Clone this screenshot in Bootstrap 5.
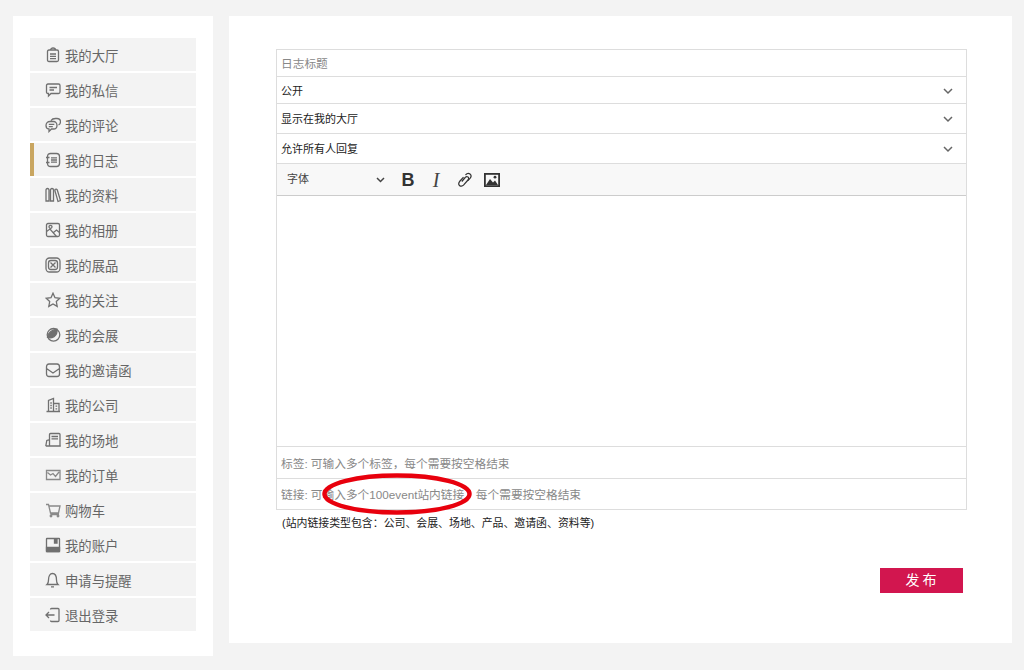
<!DOCTYPE html>
<html lang="zh">
<head>
<meta charset="utf-8">
<title>我的日志</title>
<link href="https://cdn.jsdelivr.net/npm/bootstrap@5.3.0/dist/css/bootstrap.min.css" rel="stylesheet">
<style>
html,body{height:670px;overflow:hidden}
body{background:#f3f3f3;font-family:"Liberation Sans","Noto Sans CJK SC",sans-serif;color:#333}
.page-wrap{padding:16px 12px 14px 13px;gap:16px;height:670px}
.side-panel{width:200px;height:640px;background:#fff;padding:22px 17px 0;flex:none}
.side-list{display:flex;flex-direction:column;gap:2px;list-style:none;margin:0;padding:0}
.side-item{height:33px;background:#f3f3f3;display:flex;align-items:center;padding-left:15px;font-size:13.33px;color:#666;gap:4px;border-left:0 solid #c9a661}
.side-item.on{border-left-width:4px;padding-left:11px}
.side-item span{padding-top:4px}
.side-item svg{width:16px;height:16px;flex:none;fill:none;stroke:#707070;stroke-width:1.3}
.main-panel{width:783px;height:627px;background:#fff;padding:33px 45px 0 47px;flex:none;position:relative}
.form-box{border:1px solid #ddd}
.f-row{display:flex;align-items:center;padding:0 4px;font-size:11px;color:#222;border-bottom:1px solid #ddd}
.f-row:last-child{border-bottom:0}
.r27{height:27px}.r30{height:30px}.r32{height:32px}
.ph{color:#888;font-size:11.7px}
.pad2{padding-top:2px}.pad3{padding-top:3px}
.chev{margin-left:auto;margin-right:9px;width:10px;height:7px;fill:none;stroke:#666;stroke-width:1.5}
.tool-row{height:32px;background:#f8f8f8;border-bottom:1px solid #ccc;display:flex;align-items:center;padding-left:10px;font-size:11px;color:#444}
.tool-font{width:98px;display:flex;align-items:center;justify-content:space-between;margin-right:9px}
.tool-font svg{width:9px;height:6px;fill:none;stroke:#444;stroke-width:1.5}
.tool-btn{width:28px;display:flex;justify-content:center;align-items:center;color:#333}
.t-b{font-weight:700;font-size:18px;font-family:"Liberation Sans",sans-serif;line-height:1}
.t-i{font-style:italic;font-family:"Liberation Serif",serif;font-size:20px;line-height:1;color:#444}
.edit-area{height:251px;border-bottom:1px solid #ddd}
.note-line{font-size:10.9px;color:#222;margin:5px 0 0 6px;line-height:16px}
.send-row{display:flex;justify-content:flex-end;margin:37px 4px 0 0}
.send-btn{width:83px;height:25px;background:#d2164f;color:#fff;font-size:14px;border:0;border-radius:0;padding:0 0 0 2px;letter-spacing:3px;line-height:25px}
.red-ring{position:absolute;left:93px;top:457px;width:150px;height:42px;pointer-events:none}
</style>
</head>
<body>
<div class="d-flex page-wrap">
  <aside class="side-panel">
    <ul class="side-list">
      <li class="side-item"><svg viewBox="0 0 16 16"><path d="M2.500 4.500C2.500 3.500 3 3 4 3h8c1 0 1.500.5 1.500 1.500V13c0 1-.5 1.500-1.500 1.500H4c-1 0-1.500-.5-1.500-1.500zM5.500 3c0-1 1-2 2.500-2s2.500 1 2.500 2M5 7h6M5 9.300h6M5 11.600h6"/></svg><span>我的大厅</span></li>
      <li class="side-item"><svg viewBox="0 0 16 16"><path d="M1.500 3.500c0-1 .5-1.500 1.500-1.500h10.500c1 0 1.500.5 1.500 1.500V10c0 1-.5 1.500-1.500 1.500H6L3.500 14v-2.500H3c-1 0-1.500-.5-1.500-1.500zM4.500 5.500h7.500M4.500 8H9"/></svg><span>我的私信</span></li>
      <li class="side-item"><svg viewBox="0 0 16 16"><path d="M6 3.500C7 2 8.500 1.500 10.500 1.500h1.500c2.200 0 3.500 1.500 3.500 3.200 0 1.500-.8 2.800-2 3.300M1 8.500c0-2.200 1.500-4 4-4h3.500c2 0 3.500 1.800 3.500 4s-1.500 3.500-3.500 3.500H6.500L4 14.500V12C2.200 11.800 1 10.300 1 8.500zM3.800 7.300h5.500M3.800 9.600h4"/></svg><span>我的评论</span></li>
      <li class="side-item on"><svg viewBox="0 0 16 16"><path d="M2.500 4.500c0-2 1.200-3 3-3h6c2 0 3 1 3 3v7c0 2-1 3-3 3h-6c-1.800 0-3-1-3-3zM1 5.500h3.500M1 10.500h3.500M6 5.800h6M6 8h6M6 10.200h6"/></svg><span>我的日志</span></li>
      <li class="side-item"><svg viewBox="0 0 16 16" stroke-width="1.500"><path d="M1 3c0-1 .5-1.500 1.500-1.500S4 2 4 3v11H1zM5.500 3C5.500 2 6 1.500 7 1.500S8.500 2 8.500 3v11h-3zM10 2.500c.8-.8 2-.5 2.300.5L15.500 13.500l-2.500 1L10 4z"/></svg><span>我的资料</span></li>
      <li class="side-item"><svg viewBox="0 0 16 16"><rect x="1.500" y="1.500" width="13" height="13" rx="1.500"/><path d="M1.500 9.500 5 7l6.500 7.500M8.500 10.500 11.500 8l3 2.500"/><circle cx="5.500" cy="4.800" r="1.500"/></svg><span>我的相册</span></li>
      <li class="side-item"><svg viewBox="0 0 16 16"><rect x="1" y="1" width="14" height="14" rx="3.500"/><rect x="3.500" y="3.500" width="9" height="9" rx="2.500"/><path d="m5.500 5.500 5 5M10.500 5.500l-5 5"/></svg><span>我的展品</span></li>
      <li class="side-item"><svg viewBox="0 0 16 16"><path d="m8 1.200 2 4.500 4.800.6-3.500 3.300.9 4.800L8 12l-4.200 2.400.9-4.800-3.500-3.300L6 5.700z"/></svg><span>我的关注</span></li>
      <li class="side-item"><svg viewBox="0 0 16 16"><circle cx="8.500" cy="7.800" r="6.300"/><path d="M2.500 10.500c.5-4.500 4-7.500 9.500-8.300.5 3-.8 5.800-3 7.500-2 1.300-4.500 1.500-6.500.8z" fill="#707070"/></svg><span>我的会展</span></li>
      <li class="side-item"><svg viewBox="0 0 16 16"><path d="M1.500 5c0-2 1-3 2.500-3h8c1.500 0 2.500 1 2.500 3v7c0 1.500-1 2.500-2.500 2.500H4c-1.500 0-2.500-1-2.500-2.500zM1.500 6.500 8 11l6.500-4.500"/></svg><span>我的邀请函</span></li>
      <li class="side-item"><svg viewBox="0 0 16 16"><path d="M3.500 14.500V3.500L8.500 1.500v13M8.500 6.500h5.500v8M1.500 14.500h13.500M5.300 6h1.500M5.300 8.500h1.500M5.300 11h1.500M10.500 9.200h1.700M10.500 11.800h1.700"/></svg><span>我的公司</span></li>
      <li class="side-item"><svg viewBox="0 0 16 16"><path d="M.8 14 1.800 8.500 4 7.800M4.500 14V2.500c0-.7.300-1 1-1h8.500c.7 0 1 .3 1 1V14M6.500 4.500h6.500M6.500 6.800h6.500M.8 14h15"/></svg><span>我的场地</span></li>
      <li class="side-item"><svg viewBox="0 0 16 16" stroke-width=".9" opacity=".8"><path d="M1.500 3.500h13.500v9H1.500zM2.500 5.500 5.500 8l2.500-1.500 2.500 3 3.500-4.500"/></svg><span>我的订单</span></li>
      <li class="side-item"><svg viewBox="0 0 16 16" stroke-width=".9" opacity=".8"><path d="M1 2.500h2.500l2 8.500h8L15 4H4M5.500 12.500h8.500"/><circle cx="6" cy="14" r=".8"/><circle cx="13" cy="14" r=".8"/></svg><span>购物车</span></li>
      <li class="side-item"><svg viewBox="0 0 16 16"><path d="M1.500 2c0-.3.200-.5.500-.5h12c.3 0 .5.200.5.500v12c0 .3-.2.500-.5.500H2c-.3 0-.5-.2-.5-.5z"/><path d="M1.500 10.500h13v4h-13zM9.500 2h2.500v4H9.500z" fill="#707070"/></svg><span>我的账户</span></li>
      <li class="side-item"><svg viewBox="0 0 16 16"><path d="M2 12.500c1.200-1 1.500-2 1.500-4.500C3.500 4.200 5 1.500 7.500 1.500s4 2.700 4 6.500c0 2.500.3 3.500 1.500 4.500zM6 14.800h3"/></svg><span>申请与提醒</span></li>
      <li class="side-item"><svg viewBox="0 0 16 16"><path d="M5.500 2.500c0-.7.300-1 1-1h6.500c.7 0 1 .3 1 1v11c0 .7-.3 1-1 1H6.500c-.7 0-1-.3-1-1M1 8h8.500M4 5 1 8l3 3"/></svg><span>退出登录</span></li>
    </ul>
  </aside>
  <main class="main-panel">
    <div class="form-box">
      <div class="f-row r27 ph pad2">日志标题</div>
      <div class="f-row r27 pad2">公开<svg class="chev" viewBox="0 0 10 7"><path d="m1 1 4 4 4-4"/></svg></div>
      <div class="f-row r30 pad2">显示在我的大厅<svg class="chev" viewBox="0 0 10 7"><path d="m1 1 4 4 4-4"/></svg></div>
      <div class="f-row r30 pad2">允许所有人回复<svg class="chev" viewBox="0 0 10 7"><path d="m1 1 4 4 4-4"/></svg></div>
      <div class="tool-row">
        <div class="tool-font">字体<svg viewBox="0 0 9 6"><path d="m1 1 3.500 3.500L8 1"/></svg></div>
        <span class="tool-btn t-b">B</span>
        <span class="tool-btn t-i">I</span>
        <span class="tool-btn"><svg width="15" height="15" viewBox="0 0 15 15" fill="none" stroke="#333" stroke-width="1.200"><path d="M6.500 5.200 3 9c-1.700 2-1.500 3.500-.5 4.500s2.800 1 4-.3l4.500-5.200c1-1.300.8-2.400 0-3s-2-.5-2.800.5L4.800 9.500"/><path d="M8.500 3c1.500-1.800 3.300-2 4.500-1s1.300 2.800.2 4.200L11 8.500"/></svg></span>
        <span class="tool-btn"><svg width="16" height="14" viewBox="0 0 16 14"><rect x=".9" y=".9" width="14.200" height="12.200" fill="none" stroke="#333" stroke-width="1.800"/><path d="M2 12 6 6l3 3.500 2-2 3 4.500z" fill="#333"/><circle cx="11" cy="4.200" r="1.400" fill="#333"/></svg></span>
      </div>
      <div class="edit-area"></div>
      <div class="f-row r32 ph pad3">标签: 可输入多个标签，每个需要按空格结束</div>
      <div class="f-row r30 ph pad2">链接: 可输入多个100event站内链接，每个需要按空格结束</div>
    </div>
    <p class="note-line">(站内链接类型包含：公司、会展、场地、产品、邀请函、资料等)</p>
    <div class="send-row"><button type="button" class="btn send-btn">发布</button></div>
    <svg class="red-ring" viewBox="0 0 150 42"><ellipse cx="75" cy="21" rx="72.500" ry="18.500" fill="none" stroke="#e8000d" stroke-width="4.500"/></svg>
  </main>
</div>
<script src="https://cdn.jsdelivr.net/npm/bootstrap@5.3.0/dist/js/bootstrap.bundle.min.js"></script>
</body>
</html>
